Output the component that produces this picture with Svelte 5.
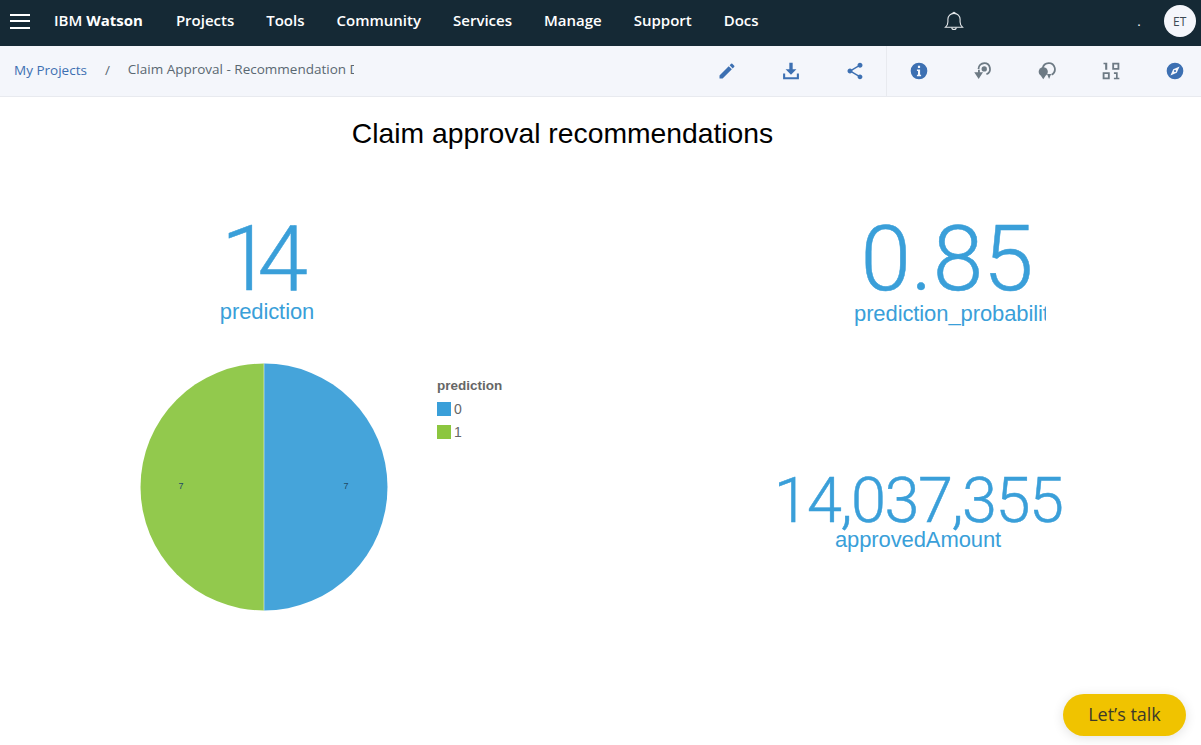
<script>
  const navItems = ["Projects", "Tools", "Community", "Services", "Manage", "Support", "Docs"];
  const pieLegend = [
    { label: "0", color: "#3a9fd9" },
    { label: "1", color: "#8cc63f" }
  ];
</script>

<div class="page">
  <header class="topbar">
    <button class="burger" aria-label="Menu">
      <span></span><span></span><span></span>
    </button>
    <div class="brand">IBM <b>Watson</b></div>
    <nav class="nav">
      {#each navItems as item}
        <span>{item}</span>
      {/each}
    </nav>
    <svg class="bell" viewBox="0 0 20 20" width="20" height="20" fill="none" stroke="#e6e9ec" stroke-width="1.1">
      <path d="M1.5 16.2c1.6-1.5 2.4-3 2.4-5.2V8.3C3.9 5 6.4 2.4 10 2.4s6.1 2.6 6.1 5.9V11c0 2.2.8 3.700 2.400 5.200z" />
      <path d="M8.800 2.300c0-1.400 2.400-1.400 2.400 0" />
      <path d="M7.800 16.400c0 2.700 4.400 2.700 4.400 0" />
    </svg>
    <span class="dot">.</span>
    <div class="avatar">ET</div>
  </header>

  <div class="subbar">
    <div class="crumbs">
      <span class="crumb-link">My Projects</span>
      <span class="slash">/</span>
      <span class="crumb-current">Claim Approval - Recommendation Dashboard</span>
    </div>
    <div class="tools">
      <svg viewBox="0 0 24 24" class="blue"><path d="M3 17.250V21h3.750L17.810 9.940l-3.750-3.750L3 17.250zM20.710 7.040a1 1 0 0 0 0-1.410l-2.340-2.340a1 1 0 0 0-1.410 0l-1.830 1.830 3.750 3.750 1.830-1.830z" /></svg>
      <svg viewBox="0 0 24 24" class="blue"><path d="M10 2h4v8h4.500L12 16.500 5.500 10H10zM2.500 15H5v4.500h14V15h2.500v7h-19z" /></svg>
      <svg viewBox="0 0 24 24" class="blue"><path d="M18 16.080c-.76 0-1.440.3-1.960.77L8.910 12.700c.05-.23.09-.46.09-.7s-.04-.47-.09-.7l7.050-4.110c.54.5 1.250.81 2.040.81 1.660 0 3-1.340 3-3s-1.340-3-3-3-3 1.340-3 3c0 .24.04.47.09.7L8.040 9.810C7.500 9.310 6.790 9 6 9c-1.660 0-3 1.340-3 3s1.340 3 3 3c.79 0 1.500-.31 2.040-.81l7.120 4.160c-.05.21-.08.43-.08.65 0 1.610 1.310 2.920 2.920 2.920s2.920-1.310 2.920-2.920-1.310-2.920-2.920-2.920z" /></svg>
    </div>
    <div class="tools tools-right">
      <svg viewBox="0 0 24 24" class="blue"><path fill-rule="evenodd" d="M12 2a10 10 0 1 0 0 20 10 10 0 0 0 0-20zm-1.300 3.800h2.600v2.600h-2.600zM9.500 10.300h3.800v6.200h1.200v1.700h-5v-1.700h1.300v-4.500H9.500z" /></svg>
      <svg viewBox="0 0 24 24" class="gray"><circle cx="13.500" cy="9.500" r="3.200" /><path d="M13.500 1.500a8 8 0 0 1 3 15.400l-.8-2a5.800 5.800 0 1 0-8-5.400H5.500a8 8 0 0 1 8-8z" /><path d="M1.500 13.500h4.500V10.500h2.200v3h3.800l-5.200 8z" /></svg>
      <svg viewBox="0 0 24 24" class="gray"><circle cx="7.500" cy="13" r="5.500" /><path d="M14 1.500a8.500 8.500 0 0 1 4 16l-1-2a6.300 6.300 0 1 0-9-7H5.800A8.500 8.500 0 0 1 14 1.500z" /><path d="M4.500 17.500h6l-3 4.500zM12 15.500h5l-2.500 6z" /></svg>
      <svg viewBox="0 0 24 24" class="gray"><path d="M3 2h4.500v8.500H5V4H3zM13.500 2H22v8.500h-8.500zm2.200 2.200v4.100h4.100V4.200zM2 13.500h8.500V22H2zm2.200 2.200v4.100h4.100v-4.100zM15.500 13.500H20V20h2v2h-6.500v-2H18v-4.500h-2.500z" /></svg>
      <svg viewBox="0 0 24 24" class="blue"><path fill-rule="evenodd" d="M12 2a10 10 0 1 0 0 20 10 10 0 0 0 0-20zm5.500 4.500-3.400 7.600-7.600 3.400 3.400-7.600zM12 10.700a1.300 1.300 0 1 0 0 2.600 1.300 1.300 0 0 0 0-2.600z" /></svg>
    </div>
  </div>

  <main class="dash">
    <h1>Claim approval recommendations</h1>
    <div class="tiles">
      <section class="col-left">
        <div class="metric metric-pred">
          <div class="value">14</div>
          <div class="label">prediction</div>
        </div>
        <div class="chart">
          <svg class="pie" viewBox="0 0 248 248" width="248" height="248">
            <path d="M124 0.500a123.500 123.500 0 0 1 0 247z" fill="#45a4da" />
            <path d="M124 0.500a123.500 123.500 0 0 0 0 247z" fill="#92c94d" />
            <line x1="124" y1="0.500" x2="124" y2="247.500" stroke="#fff" stroke-opacity="0.5" />
            <text x="206" y="126">7</text>
            <text x="41" y="126">7</text>
          </svg>
          <div class="legend">
            <div class="legend-title">prediction</div>
            {#each pieLegend as row}
              <div class="legend-row">
                <i style="background: {row.color}"></i>{row.label}
              </div>
            {/each}
          </div>
        </div>
      </section>
      <section class="col-right">
        <div class="metric metric-prob">
          <div class="value">0.85</div>
          <div class="label">prediction_probability</div>
        </div>
        <div class="metric metric-amount">
          <div class="value">14,037,355</div>
          <div class="label">approvedAmount</div>
        </div>
      </section>
    </div>
  </main>

  <button class="talk">Let’s talk</button>
</div>

<style>
  :global(body) {
    margin: 0;
    background: #fff;
  }

  .page {
    height: 745px;
    overflow: hidden;
    position: relative;
    font-family: "Noto Sans", "Liberation Sans", sans-serif;
  }

  /* top bar */
  .topbar {
    height: 46px;
    box-sizing: border-box;
    padding-bottom: 4px;
    background: #152935;
    display: flex;
    align-items: center;
    color: #fff;
    font-family: "Open Sans", "Noto Sans", sans-serif;
    font-size: 15px;
    font-weight: 600;
  }

  .burger {
    width: 20px;
    height: 15px;
    margin-left: 10px;
    padding: 0;
    border: 0;
    background: none;
    display: flex;
    flex-direction: column;
    justify-content: space-between;
  }

  .burger span {
    display: block;
    height: 2px;
    background: #fff;
  }

  .brand {
    margin-left: 24px;
    margin-bottom: 2px;
    white-space: nowrap;
  }

  .brand b {
    font-weight: 700;
  }

  .nav {
    display: flex;
    gap: 32px;
    margin-left: 33px;
    margin-bottom: 2px;
  }

  .bell {
    margin-left: 185px;
  }

  .dot {
    margin-left: 174px;
    font-size: 11px;
  }

  .avatar {
    width: 32px;
    height: 32px;
    margin-left: 23px;
    border-radius: 50%;
    background: #f4f6fb;
    color: #3d4a54;
    font-size: 12px;
    font-weight: 400;
    display: flex;
    align-items: center;
    justify-content: center;
  }

  /* breadcrumb bar */
  .subbar {
    height: 51px;
    box-sizing: border-box;
    background: #f4f6fb;
    border-bottom: 1px solid #e8eaef;
    display: flex;
    align-items: stretch;
  }

  .crumbs {
    flex: 1;
    display: flex;
    align-items: center;
    padding: 0 0 2px 14px;
    white-space: nowrap;
    font-family: "Open Sans", "Noto Sans", sans-serif;
    font-size: 13.5px;
  }

  .crumb-link {
    color: #3d70b2;
  }

  .slash {
    margin: 0 18px;
    color: #5a6872;
  }

  .crumb-current {
    width: 226px;
    overflow: hidden;
    color: #5a6872;
    margin-bottom: 2px;
  }

  .tools {
    display: flex;
    align-items: center;
    gap: 44px;
    padding-right: 21px;
  }

  .tools-right {
    border-left: 1px solid #e8eaef;
    padding: 0 16px 0 22px;
  }

  .tools svg {
    width: 20px;
    height: 20px;
    flex: none;
  }

  .blue {
    fill: #3d70b2;
  }

  .gray {
    fill: #6d7a84;
  }

  /* dashboard */
  .dash {
    font-family: "Liberation Sans", Arial, sans-serif;
  }

  h1 {
    margin: 0;
    padding-top: 19px;
    width: 1125px;
    text-align: center;
    font-size: 28.3px;
    font-weight: 400;
    line-height: 34px;
    color: #000;
  }

  .tiles {
    display: grid;
    grid-template-columns: 534px 1fr;
  }

  .metric {
    color: #3a9fd9;
    text-align: center;
  }

  .value {
    font-family: Roboto, "Liberation Sans", sans-serif;
    font-weight: 300;
    font-size: 91px;
    line-height: 78px;
    white-space: nowrap;
    -webkit-text-stroke: 0.5px #3a9fd9;
  }

  .label {
    font-size: 22px;
    line-height: 28px;
    letter-spacing: -0.1px;
    white-space: nowrap;
  }

  .metric-pred {
    margin-top: 70px;
  }

  .metric-pred .value {
    letter-spacing: -14px;
    padding-right: 19px;
  }

  .chart {
    display: flex;
    margin: 37px 0 0 140px;
  }

  .pie text {
    font-size: 9px;
    fill: #1f4a66;
    text-anchor: middle;
  }

  .legend {
    margin: 14px 0 0 49px;
    color: #666;
    font-size: 13.5px;
  }

  .legend-title {
    font-weight: 700;
    line-height: 18px;
    margin-bottom: 2px;
  }

  .legend-row {
    display: flex;
    align-items: center;
    gap: 3px;
    height: 23px;
    font-size: 14px;
  }

  .legend-row i {
    width: 14px;
    height: 14px;
    display: block;
  }

  .metric-prob {
    margin: 70px 0 0 320px;
    width: 192px;
  }

  .metric-prob .value {
    display: flex;
    justify-content: center;
    padding-right: 6px;
  }

  .metric-prob .label {
    overflow: hidden;
    text-align: left;
    margin-top: 2px;
  }

  .metric-amount {
    margin: 142px 0 0 240px;
    width: 288px;
  }

  .metric-amount .value {
    display: flex;
    justify-content: center;
    font-size: 63px;
    line-height: 62px;
    letter-spacing: -1.5px;
  }

  .metric-amount .label {
    margin-top: -6px;
  }

  /* floating chat button */
  .talk {
    position: absolute;
    right: 15px;
    bottom: 9px;
    width: 123px;
    height: 42px;
    padding: 0 0 3px;
    border: 0;
    border-radius: 21px;
    background: #f0c300;
    color: #3d3a2a;
    font-family: "Open Sans", "Noto Sans", sans-serif;
    font-size: 18px;
    box-shadow: 0 2px 12px rgba(0, 0, 0, 0.12);
  }
</style>
